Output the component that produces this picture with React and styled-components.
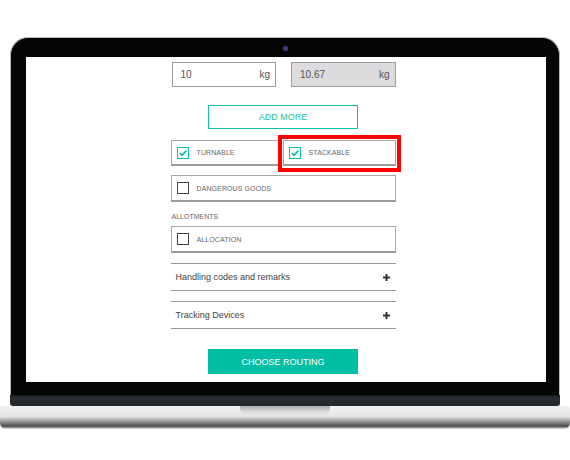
import styled, { createGlobalStyle } from 'styled-components';

const Global = createGlobalStyle`
	body {
		margin: 0;
		background: #ffffff;
		font-family: 'Liberation Sans', Arial, sans-serif;
	}
`;

const teal = '#13bfa6';

const Check = ({ checked }) => (
	<CheckBox $checked={checked}>
		{checked && (
			<svg width='10' height='10' viewBox='0 0 10 10'>
				<polyline points='1.8,5.2 4,7.3 8.4,2.6' fill='none' stroke={teal} strokeWidth='1.8' />
			</svg>
		)}
	</CheckBox>
);

const Plus = () => (
	<svg width='7' height='7' viewBox='0 0 7 7'>
		<path d='M3.5 0 V7 M0 3.5 H7' stroke='#333' strokeWidth='2' />
	</svg>
);

const App = () => {
	return (
		<Page>
			<Global />
			<Lid>
				<Camera />
				<Screen>
					<Column>
						<InputRow>
							<Field>
								<span>10</span>
								<span>kg</span>
							</Field>
							<Field $readonly>
								<span>10.67</span>
								<span>kg</span>
							</Field>
						</InputRow>

						<OutlineButton>ADD MORE</OutlineButton>

						<OptionGrid>
							<Option>
								<Check checked />
								TURNABLE
							</Option>
							<Option>
								<Check checked />
								STACKABLE
								<Highlight />
							</Option>
						</OptionGrid>

						<Option $gap={9} $height={27}>
							<Check />
							DANGEROUS GOODS
						</Option>

						<SectionLabel>ALLOTMENTS</SectionLabel>
						<Option $gap={6} $height={27}>
							<Check />
							ALLOCATION
						</Option>

						<Accordion $gap={10}>
							Handling codes and remarks
							<Plus />
						</Accordion>
						<Accordion $gap={10}>
							Tracking Devices
							<Plus />
						</Accordion>

						<SolidButton>CHOOSE ROUTING</SolidButton>
					</Column>
				</Screen>
			</Lid>
			<Hinge />
			<Base>
				<Notch />
			</Base>
		</Page>
	);
};

const Page = styled.div`
	width: 570px;
	padding-top: 37px;
	display: flex;
	flex-direction: column;
	align-items: center;
`;

const Lid = styled.div`
	position: relative;
	box-sizing: border-box;
	width: 550px;
	height: 358px;
	padding: 19px 13px 13px 15px;
	background: #050506;
	border: 1px solid #b9b9bb;
	border-bottom: none;
	border-radius: 18px 18px 0 0;
`;

const Camera = styled.div`
	position: absolute;
	top: 8px;
	left: 272px;
	width: 5px;
	height: 5px;
	border-radius: 50%;
	background: #3d3b78;
	box-shadow: 0 0 2px #25244a;
`;

const Screen = styled.div`
	height: 325px;
	background: #ffffff;
	display: flex;
	justify-content: center;
	padding-right: 6px;
	padding-top: 5px;
	box-sizing: border-box;
`;

const Column = styled.div`
	width: 225px;
	display: flex;
	flex-direction: column;
	align-items: stretch;
`;

const InputRow = styled.div`
	display: grid;
	grid-template-columns: 1fr 1fr;
	gap: 15px;
	padding-left: 1px;
`;

const Field = styled.div`
	height: 25px;
	box-sizing: border-box;
	border: 1px solid #9d9d9d;
	background: ${(p) => (p.$readonly ? '#dddbdd' : '#ffffff')};
	display: flex;
	align-items: center;
	justify-content: space-between;
	padding: 0 5px 0 8px;
	font-size: 10px;
	color: #555;
`;

const OutlineButton = styled.div`
	align-self: center;
	width: 150px;
	height: 24px;
	box-sizing: border-box;
	margin-top: 18px;
	border: 1px solid ${teal};
	color: ${teal};
	font-size: 9px;
	display: flex;
	align-items: center;
	justify-content: center;
`;

const OptionGrid = styled.div`
	display: grid;
	grid-template-columns: 109px 1fr;
	gap: 3px;
	margin-top: 11px;
`;

const Option = styled.div`
	position: relative;
	height: ${(p) => p.$height || 26}px;
	box-sizing: border-box;
	margin-top: ${(p) => p.$gap || 0}px;
	border: 1px solid #a9a9a9;
	border-bottom: 2px solid #9a9a9a;
	display: flex;
	align-items: center;
	gap: 8px;
	padding-left: 5px;
	font-size: 7px;
	color: #666;
	letter-spacing: 0.1px;
`;

const CheckBox = styled.span`
	width: 12px;
	height: 12px;
	box-sizing: border-box;
	border: 1px solid ${(p) => (p.$checked ? teal : '#444')};
	display: flex;
	align-items: center;
	justify-content: center;
`;

const Highlight = styled.span`
	position: absolute;
	top: -6px;
	left: -6px;
	right: -6px;
	bottom: -8px;
	border: 4px solid #ff0000;
	pointer-events: none;
`;

const SectionLabel = styled.div`
	margin-top: 11px;
	font-size: 7px;
	color: #666;
	padding-left: 1px;
`;

const Accordion = styled.div`
	height: 28px;
	box-sizing: border-box;
	margin-top: ${(p) => p.$gap}px;
	border-top: 1px solid #9a9a9a;
	border-bottom: 1px solid #9a9a9a;
	display: flex;
	align-items: center;
	justify-content: space-between;
	padding: 0 6px 0 5px;
	font-size: 9px;
	color: #444;
`;

const SolidButton = styled.div`
	align-self: center;
	width: 150px;
	height: 25px;
	margin-top: 20px;
	background: #00bfa5;
	color: #ffffff;
	font-size: 9px;
	display: flex;
	align-items: center;
	justify-content: center;
`;

const Hinge = styled.div`
	width: 550px;
	height: 11px;
	background: linear-gradient(#15171a 0%, #2a2d33 25%, #23262b 100%);
	border-radius: 0 0 3px 3px;
`;

const Base = styled.div`
	width: 570px;
	height: 23px;
	display: flex;
	justify-content: center;
	align-items: flex-start;
	border-radius: 2px 2px 6px 6px;
	background: linear-gradient(
		#f2f2f4 0%,
		#e6e6e8 45%,
		#c4c4c6 55%,
		#8c8c8e 70%,
		#4a4a4c 88%,
		#9a9a9c 94%,
		#e4e4e4 100%
	);
`;

const Notch = styled.div`
	width: 90px;
	height: 9px;
	border-radius: 0 0 7px 7px;
	background: linear-gradient(#a9a9ab, #d8d8da 60%, #e9e9eb);
`;

export default App;
